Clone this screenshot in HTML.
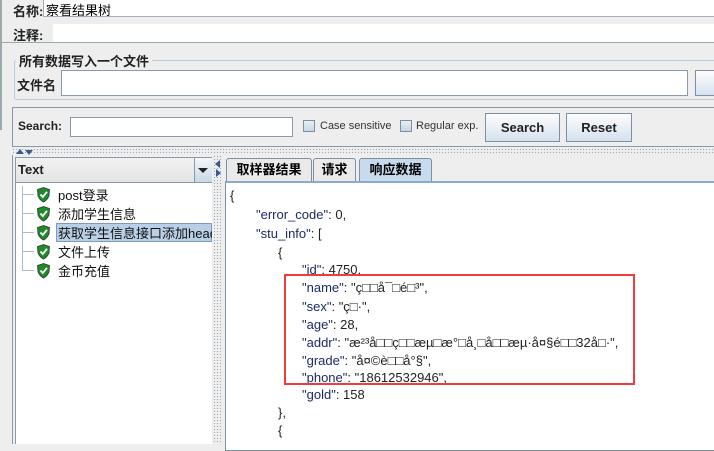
<html><head><style>
body{margin:0;width:714px;height:444px;background:#eeeeee;position:relative;overflow:hidden;font-family:"Liberation Sans","Noto Sans CJK SC",sans-serif;font-size:12px;color:#000}
.a{position:absolute}
.lbl{font-weight:bold;font-size:13px;color:#222}
.inp{background:#fff;border:1px solid #8a9aa8;box-sizing:border-box}
.btn{background:linear-gradient(#fdfdfe,#d5e2ef);border:1px solid #7d8fa2;box-sizing:border-box;font-weight:bold;font-size:13px;text-align:center;color:#222}
.cb{width:12px;height:12px;border:1px solid #7d8fa2;background:linear-gradient(#e8eef5,#c6d5e4);box-sizing:border-box}
.dots{background-image:radial-gradient(#9aa8b8 0.6px,transparent 0.8px);background-size:3px 3px}
.tab{top:158px;height:24px;border:1px solid #7d8fa2;border-bottom:none;box-sizing:border-box;font-weight:bold;font-size:13px;text-align:center;line-height:22px;background:#eaeaea;border-radius:3px 3px 0 0}
.j{position:absolute;white-space:nowrap;font-size:13px;color:#222;line-height:14px}
.k{color:#1c2a66}
.t{left:58px;font-size:13px;color:#111;white-space:nowrap}
</style></head><body>
<div class="a" style="left:0;top:0;width:2px;height:130px;background:#9aa"></div>
<div class="a lbl" style="left:13px;top:1px">名称:</div>
<div class="a inp" style="left:43px;top:-1px;width:680px;height:18px;border-color:#aab"></div>
<div class="a" style="left:46px;top:0px;font-size:13px">察看结果树</div>
<div class="a lbl" style="left:13px;top:25px">注释:</div>
<div class="a" style="left:53px;top:24px;width:670px;height:18px;background:#fff"></div>
<div class="a" style="left:2px;top:42px;width:712px;height:1px;background:#9aa"></div>
<div class="a" style="left:14px;top:60px;width:710px;height:38px;border:1px solid #b8cbe0;border-radius:3px"></div>
<div class="a lbl" style="left:16px;top:51px;background:#eee;padding:0 3px">所有数据写入一个文件</div>
<div class="a lbl" style="left:17px;top:75px">文件名</div>
<div class="a inp" style="left:61px;top:70px;width:627px;height:26px"></div>
<div class="a btn" style="left:695px;top:70px;width:30px;height:26px"></div>
<div class="a" style="left:12px;top:107px;width:710px;height:40px;border:1px solid #8a9aa8;border-right:none;box-sizing:border-box"></div>
<div class="a lbl" style="left:18px;top:119px;font-size:12px">Search:</div>
<div class="a inp" style="left:70px;top:117px;width:223px;height:20px"></div>
<div class="a cb" style="left:303px;top:120px"></div>
<div class="a" style="left:320px;top:120px;font-size:11px;color:#333">Case sensitive</div>
<div class="a cb" style="left:400px;top:120px"></div>
<div class="a" style="left:416px;top:120px;font-size:11px;color:#333">Regular exp.</div>
<div class="a btn" style="left:485px;top:113px;width:75px;height:29px;line-height:27px">Search</div>
<div class="a btn" style="left:566px;top:113px;width:66px;height:29px;line-height:27px">Reset</div>
<div class="a dots" style="left:12px;top:148px;width:702px;height:7px"></div>
<div class="a" style="left:16px;top:149px;border:4px solid transparent;border-bottom:5px solid #3a5a8a;border-top:none"></div>
<div class="a" style="left:25px;top:150px;border:4px solid transparent;border-top:5px solid #3a5a8a;border-bottom:none"></div>
<div class="a" style="left:12px;top:155px;width:1px;height:289px;background:#8a9aa8"></div>
<div class="a" style="left:15px;top:157px;width:197px;height:26px;border:1px solid #8a9aa8;box-sizing:border-box;background:linear-gradient(#f2f2f2,#e4e4e4)"></div>
<div class="a" style="left:18px;top:162px;font-weight:bold;font-size:13px;color:#222">Text</div>
<div class="a" style="left:194px;top:158px;width:17px;height:24px;background:linear-gradient(#f4f6f9,#c9d8e8);border-left:1px solid #8a9aa8"></div>
<div class="a" style="left:198px;top:168px;border:5px solid transparent;border-top:5px solid #222;border-bottom:none"></div>
<div class="a" style="left:15px;top:183px;width:197px;height:261px;background:#fff;border-left:1px solid #8a9aa8;box-sizing:border-box"></div>
<div class="a" style="left:22px;top:186px;width:1px;height:84px;background:#a8bcd0"></div>
<div class="a" style="left:22px;top:194px;width:12px;height:1px;background:#a8bcd0"></div>
<div class="a" style="left:22px;top:213px;width:12px;height:1px;background:#a8bcd0"></div>
<div class="a" style="left:22px;top:232px;width:12px;height:1px;background:#a8bcd0"></div>
<div class="a" style="left:22px;top:251px;width:12px;height:1px;background:#a8bcd0"></div>
<div class="a" style="left:22px;top:270px;width:12px;height:1px;background:#a8bcd0"></div>
<div class="a" style="left:56px;top:223px;width:156px;height:19px;background:#b8cfe5;border:1px solid #7d9ac0;box-sizing:border-box"></div>
<svg class="a" style="left:36px;top:187px" width="15" height="95" viewBox="0 0 15 95">
<defs><g id="s"><path d="M7.5 0.5 L13.5 2.5 L13 9 Q11 13.5 7.5 15 Q4 13.5 2 9 L1.5 2.5Z" fill="#1f8a2a" stroke="#333" stroke-width="0.8"/><path d="M4.5 7.5 L6.8 10 L11 4.8" stroke="#fff" stroke-width="1.8" fill="none"/></g></defs>
<use href="#s" y="0"/><use href="#s" y="19"/><use href="#s" y="38"/><use href="#s" y="57"/><use href="#s" y="76"/></svg>
<div class="a t" style="top:185px">post登录</div>
<div class="a t" style="top:204px">添加学生信息</div>
<div class="a t" style="top:223px;width:154px;overflow:hidden">获取学生信息接口添加header</div>
<div class="a t" style="top:242px">文件上传</div>
<div class="a t" style="top:261px">金币充值</div>
<div class="a dots" style="left:213px;top:155px;width:9px;height:289px"></div>
<div class="a" style="left:215px;top:160px;border:4px solid transparent;border-right:5px solid #3a5a8a;border-left:none"></div>
<div class="a" style="left:216px;top:169px;border:4px solid transparent;border-left:5px solid #3a5a8a;border-right:none"></div>
<div class="a tab" style="left:226px;width:86px">取样器结果</div>
<div class="a tab" style="left:313px;width:43px">请求</div>
<div class="a tab" style="left:359px;width:73px;background:#c7dbef">响应数据</div>
<div class="a" style="left:225px;top:181px;width:500px;height:270px;background:#fff;border:1px solid #7d8fa2;border-top:2px solid #8fa9c8;box-sizing:border-box"></div>
<div class="j" style="left:230px;top:189px">{</div>
<div class="j" style="left:256px;top:208px"><span class="k">"error_code"</span>: 0,</div>
<div class="j" style="left:256px;top:227px"><span class="k">"stu_info"</span>: [</div>
<div class="j" style="left:278px;top:246px">{</div>
<div class="j" style="left:302px;top:263px"><span class="k">"id"</span>: 4750,</div>
<div class="j" style="left:302px;top:281px"><span class="k">"name"</span>: "ç□□å¯□é□³",</div>
<div class="j" style="left:302px;top:300px"><span class="k">"sex"</span>: "ç□·",</div>
<div class="j" style="left:302px;top:318px"><span class="k">"age"</span>: 28,</div>
<div class="j" style="left:302px;top:336px"><span class="k">"addr"</span>: "æ²³å□□ç□□æµ□æ°□å¸□å□□æµ·å¤§é□□32å□·",</div>
<div class="j" style="left:302px;top:354px"><span class="k">"grade"</span>: "å¤©è□□å°§",</div>
<div class="j" style="left:302px;top:371px"><span class="k">"phone"</span>: "18612532946",</div>
<div class="j" style="left:302px;top:388px"><span class="k">"gold"</span>: 158</div>
<div class="j" style="left:278px;top:406px">},</div>
<div class="j" style="left:278px;top:424px">{</div>
<div class="a" style="left:284px;top:274px;width:351px;height:111px;border:2px solid #f03c3c;box-sizing:border-box"></div>
</body></html>
